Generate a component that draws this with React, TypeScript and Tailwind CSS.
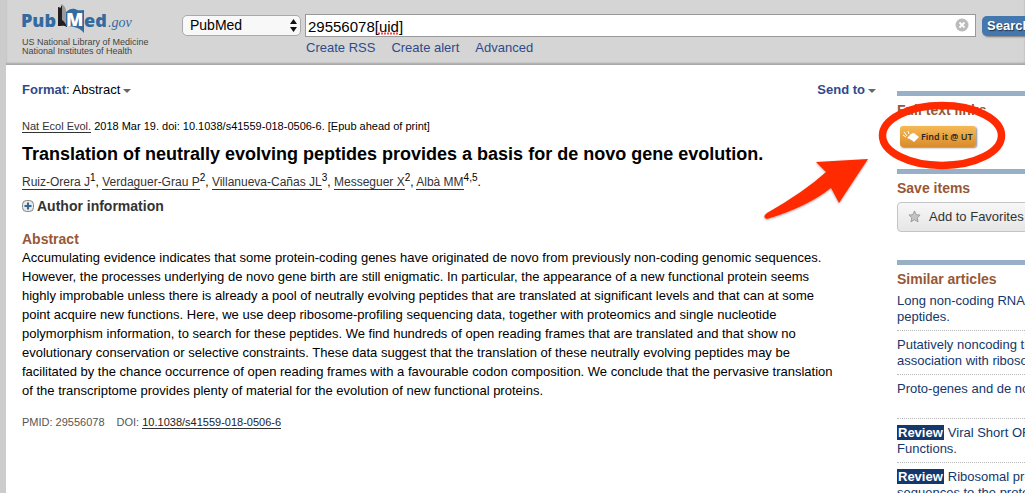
import type { ReactNode } from "react";

const link = "text-[#2f4a8b]";

function Caret() {
  return (
    <svg width="8" height="4" viewBox="0 0 8 4" className="ml-[3px] inline-block align-middle" aria-hidden="true">
      <path d="M0 0h8L4 4z" fill="#666" />
    </svg>
  );
}

function Logo() {
  return (
    <svg width="114" height="32" viewBox="0 0 114 32" role="img" aria-label="PubMed.gov">
      <text x="-1" y="23" fontFamily="Open Sans, sans-serif" fontWeight="800" fontSize="18" fill="#336a9f">Pub</text>
      <path d="M36 3l4 1 5 17v2c-3-2-6-1-9-1z" fill="#231f20" />
      <path d="M39 0c3 1 5 4 5 7v14c-1-2-3-4-5-5z" fill="#9a9a9c" />
      <path d="M39 2l1 0v14c2 1 3 3 4 5-2-2-4-3-6-3z" fill="#231f20" />
      <path d="M44 22V8c3-3 6-4 9-3 3 2 6 1 9 1v23c-4-5-10-7-18-7z" fill="#336a9f" />
      <text x="44" y="22" fontFamily="Open Sans, sans-serif" fontWeight="800" fontSize="18" fill="#fff">M</text>
      <text x="62" y="23" fontFamily="Open Sans, sans-serif" fontWeight="800" fontSize="18" fill="#336a9f">ed</text>
      <text x="86" y="23" fontFamily="Liberation Serif, serif" fontStyle="italic" fontSize="14" fill="#336a9f">.gov</text>
    </svg>
  );
}

function Header() {
  return (
    <header className="relative z-10 flex h-[65px] shrink-0 items-start bg-[#d5d5d5] shadow-[inset_0_-2px_2px_rgba(0,0,0,0.22)]">
      <div className="w-[176px] shrink-0 pt-1 pl-4">
        <a href="#home" className="block"><Logo /></a>
        <p className="pt-[2px] text-[9px] leading-[9px] whitespace-nowrap text-[#444]">
          US National Library of Medicine
          <br />
          National Institutes of Health
        </p>
      </div>
      <form className="flex min-w-0 flex-1 items-start pt-[14px]" onSubmit={(e) => e.preventDefault()}>
        <div className="relative mt-px mr-1 w-[119px] shrink-0">
          <select
            aria-label="Database"
            className="block h-[21px] w-full appearance-none rounded-[5px] border border-[#aaa] bg-[#f8f8f8] pb-[2px] pl-[7px] text-sm leading-[16px] text-black"
          >
            <option>PubMed</option>
          </select>
          <svg width="7" height="13" viewBox="0 0 7 13" className="pointer-events-none absolute top-1 right-1" aria-hidden="true">
            <path d="M3.500 0L7 5H0zM0 8h7l-3.500 5z" fill="#111" />
          </svg>
        </div>
        <div className="min-w-0 flex-1">
          <div className="relative">
            <input
              aria-label="Search term"
              spellCheck={false}
              defaultValue="29556078[uid]"
              className="block h-[23px] w-full border border-[#999] bg-white px-[2px] pt-px text-[15px] text-black"
            />
            <svg width="30" height="3" viewBox="0 0 30 3" className="pointer-events-none absolute top-[18px] left-[73px]" aria-hidden="true">
              <path d="M0 1.500h20" stroke="#f44" strokeWidth="2" strokeDasharray="2 1" />
            </svg>
            <button type="button" aria-label="Clear search" className="absolute top-1 right-[7px]">
              <svg width="14" height="14" viewBox="0 0 14 14" className="block">
                <circle cx="7" cy="7" r="6.500" fill="#bbb" />
                <path d="M4.500 4.500l5 5m0-5l-5 5" stroke="#fff" strokeWidth="1.800" />
              </svg>
            </button>
          </div>
          <nav className={`flex gap-4 pt-[3px] pl-px text-[13px] leading-4 ${link}`}>
            <a href="#rss">Create RSS</a>
            <a href="#alert">Create alert</a>
            <a href="#advanced">Advanced</a>
          </nav>
        </div>
        <div className="ml-[6px] mt-[2px] h-7 w-[43px] shrink-0 overflow-hidden">
          <button
            type="submit"
            className="block h-5 w-[60px] rounded-[5px] bg-[#4377ae] pl-[5px] text-left text-[13px] leading-5 font-bold text-white shadow-[1px_1px_2px_#777] [text-shadow:1px_1px_1px_#234]"
          >
            Search
          </button>
        </div>
      </form>
    </header>
  );
}

const authors = [
  { name: "Ruiz-Orera J", ref: "1" },
  { name: "Verdaguer-Grau P", ref: "2" },
  { name: "Villanueva-Cañas JL", ref: "3" },
  { name: "Messeguer X", ref: "2" },
  { name: "Albà MM", ref: "4,5" },
];

const abstractLines = [
  "Accumulating evidence indicates that some protein-coding genes have originated de novo from previously non-coding genomic sequences.",
  "However, the processes underlying de novo gene birth are still enigmatic. In particular, the appearance of a new functional protein seems",
  "highly improbable unless there is already a pool of neutrally evolving peptides that are translated at significant levels and that can at some",
  "point acquire new functions. Here, we use deep ribosome-profiling sequencing data, together with proteomics and single nucleotide",
  "polymorphism information, to search for these peptides. We find hundreds of open reading frames that are translated and that show no",
  "evolutionary conservation or selective constraints. These data suggest that the translation of these neutrally evolving peptides may be",
  "facilitated by the chance occurrence of open reading frames with a favourable codon composition. We conclude that the pervasive translation",
  "of the transcriptome provides plenty of material for the evolution of new functional proteins.",
];

function Article() {
  return (
    <main className="min-w-0 flex-1 pt-[17px] pl-4">
      <div className="flex justify-between text-[13px] leading-4">
        <button type="button">
          <b className={link}>Format</b>: Abstract
          <Caret />
        </button>
        <button type="button" className={`font-bold ${link}`}>
          Send to
          <Caret />
        </button>
      </div>
      <p className="mt-[21px] text-[11px] leading-[14px]">
        <a href="#journal" className="border-b border-[#333] text-[#333]">Nat Ecol Evol.</a> 2018 Mar 19. doi: 10.1038/s41559-018-0506-6. [Epub ahead of print]
      </p>
      <h1 className="mt-[10px] text-lg leading-[22px] font-bold">
        Translation of neutrally evolving peptides provides a basis for de novo gene evolution.
      </h1>
      <p className="mt-2 text-xs leading-[18px]">
        {authors.map((a, i) => (
          <span key={a.name}>
            <a href="#author" className="border-b border-[#333] text-[#333]">{a.name}</a>
            <sup className="text-[10px]">{a.ref}</sup>
            {i < authors.length - 1 ? ", " : "."}
          </span>
        ))}
      </p>
      <button type="button" className="mt-[6px] flex items-center gap-[3px] text-sm leading-[18px] font-bold text-[#333]">
        <svg width="12" height="12" viewBox="0 0 12 12" aria-hidden="true">
          <rect x=".5" y=".5" width="11" height="11" rx="4" fill="#e8e8e8" stroke="#888" />
          <path d="M6 2.500v7M2.500 6h7" stroke="#336699" strokeWidth="2" />
        </svg>
        Author information
      </button>
      <h2 className="mt-4 text-sm leading-[17px] font-bold text-[#985735]">Abstract</h2>
      <p className="text-[13px] leading-[19px] whitespace-nowrap">
        {abstractLines.map((line) => (
          <span key={line} className="block">{line}</span>
        ))}
      </p>
      <p className="mt-[15px] flex gap-3 text-[11px] leading-[14px] text-[#555]">
        <span>PMID: 29556078</span>
        <span>
          DOI: <a href="#doi" className="border-b border-[#333] text-[#222]">10.1038/s41559-018-0506-6</a>
        </span>
      </p>
    </main>
  );
}

function Panel({ title, children }: { title: string; children: ReactNode }) {
  return (
    <section className="border-t-[5px] border-[#97b0c8] pt-[6px]">
      <h3 className="text-sm leading-4 font-bold text-[#985735]">{title}</h3>
      {children}
    </section>
  );
}

const similar = [
  { review: false, lines: ["Long non-coding RNAs", "peptides."] },
  { review: false, lines: ["Putatively noncoding transcripts", "association with ribosomes."] },
  { review: false, lines: ["Proto-genes and de novo"] },
  { review: true, lines: ["Viral Short ORFs", "Functions."] },
  { review: true, lines: ["Ribosomal profiling", "sequences to the protein"] },
];

function Sidebar() {
  return (
    <aside className="relative w-32 shrink-0">
      <div className="h-full overflow-hidden pt-[26px]">
        <div className="w-56">
          <div className="h-[78px]">
            <Panel title="Full text links">
              <a
                href="#find"
                className="mt-2 ml-[3px] flex h-[21px] w-[76px] items-center gap-px rounded-[3px] bg-linear-to-b from-[#f5ba55] to-[#d98b2b] pl-[3px] font-['Open_Sans',sans-serif] text-[9px] font-semibold whitespace-nowrap text-[#222] shadow-[1px_1px_2px_#888]"
              >
                <svg width="17" height="12" viewBox="0 0 17 12" aria-hidden="true">
                  <path d="M4 7c2-1 3-5 7-5l5 4-5 5c-2-2-4-3-7-4z" fill="#fff" />
                  <path d="M1 1l3 4M5 0l1 3M0 4l3 2" stroke="#fff" fill="none" />
                </svg>
                Find it @ UT
              </a>
            </Panel>
          </div>
          <div className="h-[91px]">
            <Panel title="Save items">
              <button
                type="button"
                className="mt-[6px] flex h-[30px] w-[160px] items-center gap-2 rounded-[4px] border border-[#c4c4c4] bg-linear-to-b from-[#f7f7f7] to-[#e6e6e6] pb-px pl-[10px] text-[13px] text-[#333]"
              >
                <svg width="13" height="13" viewBox="0 0 14 14" aria-hidden="true">
                  <path d="M7 1l1.800 4 4.200.500-3.100 2.900.900 4.300L7 10.500l-3.800 2.200.900-4.300L1 5.500 5.200 5z" fill="#c4c4c4" stroke="#999" />
                </svg>
                Add to Favorites
              </button>
            </Panel>
          </div>
          <Panel title="Similar articles">
            <ul className="pt-[6px] text-[13px] leading-4 whitespace-nowrap text-[#14376c]">
              {similar.map((s) => (
                <li key={s.lines[0]} className="mb-[6px] h-[38px] border-b border-dotted border-[#bbb]">
                  <a href="#article">
                    {s.review && <b className="mr-1 bg-[#14376c] px-px text-white">Review</b>}
                    {s.lines[0]}
                    <br />
                    {s.lines[1]}
                  </a>
                </li>
              ))}
            </ul>
          </Panel>
        </div>
      </div>
      <svg width="250" height="126" viewBox="0 0 250 126" className="pointer-events-none absolute top-[31px] -left-[136px]" aria-hidden="true">
        <defs>
          <filter id="shade" x="-10%" y="-10%" width="120%" height="130%">
            <feDropShadow dx="0" dy="1" stdDeviation="1" floodOpacity="0.35" />
          </filter>
        </defs>
        <ellipse cx="181" cy="39.500" rx="59.500" ry="30" fill="none" stroke="#ff2a00" strokeWidth="7.500" />
        <path d="M4 122Q2 120 6 117Q43 96 65 76L55 66L107 63L78 107L70 92Q46 111 6 123Z" fill="#ff2a00" filter="url(#shade)" />
      </svg>
    </aside>
  );
}

export default function App() {
  return (
    <div className="flex h-screen flex-col overflow-hidden border-l-[6px] border-[#ccc] bg-white font-['Liberation_Sans',Arial,sans-serif] text-black">
      <Header />
      <div className="flex min-h-0 flex-1 gap-[21px]">
        <Article />
        <Sidebar />
      </div>
    </div>
  );
}
